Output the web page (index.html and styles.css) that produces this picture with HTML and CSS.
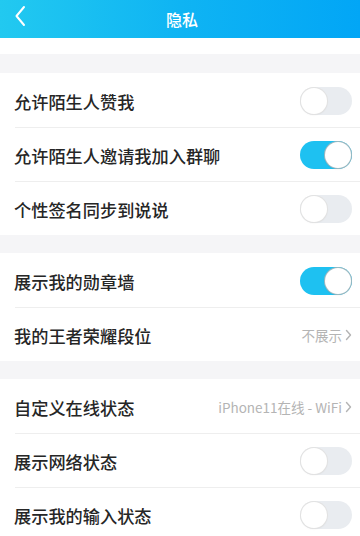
FILE: index.html
```html
<!DOCTYPE html>
<html lang="zh">
<head>
<meta charset="utf-8">
<link rel="stylesheet" href="styles.css">
</head>
<body>
<div class="header">
  <svg class="back" width="12" height="22" viewBox="0 0 12 22"><path d="M10 2 L2.5 11 L10 20" fill="none" stroke="#fff" stroke-width="2" stroke-linecap="round" stroke-linejoin="round"/></svg>
  <div class="title">隐私</div>
</div>
<div class="spacer"></div>
<div class="gap first"></div>
<div class="section">
  <div class="row"><span class="label">允许陌生人赞我</span><span class="toggle"></span></div>
  <div class="row"><span class="label">允许陌生人邀请我加入群聊</span><span class="toggle on"></span></div>
  <div class="row"><span class="label">个性签名同步到说说</span><span class="toggle"></span></div>
</div>
<div class="gap"></div>
<div class="section">
  <div class="row"><span class="label">展示我的勋章墙</span><span class="toggle on"></span></div>
  <div class="row"><span class="label">我的王者荣耀段位</span><span class="value">不展示<svg class="chev" width="7" height="12" viewBox="0 0 7 12"><path d="M1.5 1.5 L5.5 6 L1.5 10.5" fill="none" stroke="#b4b4b4" stroke-width="1.4" stroke-linecap="round" stroke-linejoin="round"/></svg></span></div>
</div>
<div class="gap"></div>
<div class="section">
  <div class="row"><span class="label">自定义在线状态</span><span class="value">iPhone11在线 - WiFi<svg class="chev" width="7" height="12" viewBox="0 0 7 12"><path d="M1.5 1.5 L5.5 6 L1.5 10.5" fill="none" stroke="#b4b4b4" stroke-width="1.4" stroke-linecap="round" stroke-linejoin="round"/></svg></span></div>
  <div class="row"><span class="label">展示网络状态</span><span class="toggle"></span></div>
  <div class="row"><span class="label">展示我的输入状态</span><span class="toggle"></span></div>
</div>
</body>
</html>
```

FILE: styles.css
```css
* { box-sizing: border-box; }
html, body { margin: 0; padding: 0; }
body {
  width: 360px;
  height: 536px;
  overflow: hidden;
  background: #ffffff;
  font-family: "Noto Sans CJK SC", "Noto Sans", sans-serif;
}
.header {
  height: 38px;
  background: linear-gradient(90deg, #22c9f0 0%, #0fb4f3 50%, #02a6f6 100%);
  display: flex;
  align-items: center;
  justify-content: center;
  position: relative;
}
.back {
  position: absolute;
  left: 14px;
  top: 5px;
}
.title {
  color: #ffffff;
  font-size: 16px;
  font-weight: 500;
  margin-left: 4px;
}
.spacer { height: 16px; background: #ffffff; }
.gap { height: 18px; background: #f5f5f7; }
.gap.first { height: 19px; }
.section { background: #ffffff; }
.row {
  height: 54px;
  display: flex;
  align-items: center;
  justify-content: space-between;
  padding: 2px 8px 0 14px;
  position: relative;
}
.row + .row::before {
  content: "";
  position: absolute;
  left: 15px;
  right: 0;
  top: 0;
  height: 1px;
  background: #eeeeee;
}
.label {
  font-size: 17.2px;
  color: #262626;
  font-weight: 500;
}
.value {
  font-size: 13.5px;
  color: #b4b4b4;
  display: flex;
  align-items: center;
  gap: 3px;
}
.toggle {
  width: 52px;
  height: 28px;
  border-radius: 14px;
  background: #e9ecf0;
  position: relative;
}
.toggle::after {
  content: "";
  position: absolute;
  left: 1px;
  top: 1px;
  width: 26px;
  height: 26px;
  border-radius: 50%;
  background: #ffffff;
  box-shadow: 0 0 0 1px #e2e2e2, 0 1px 2px rgba(0,0,0,0.08);
}
.toggle.on {
  background: #1ec1f1;
}
.toggle.on::after {
  left: 25px;
  box-shadow: 0 0 0 1px #9fb8bf, 0 1px 2px rgba(0,0,0,0.1);
}
```
